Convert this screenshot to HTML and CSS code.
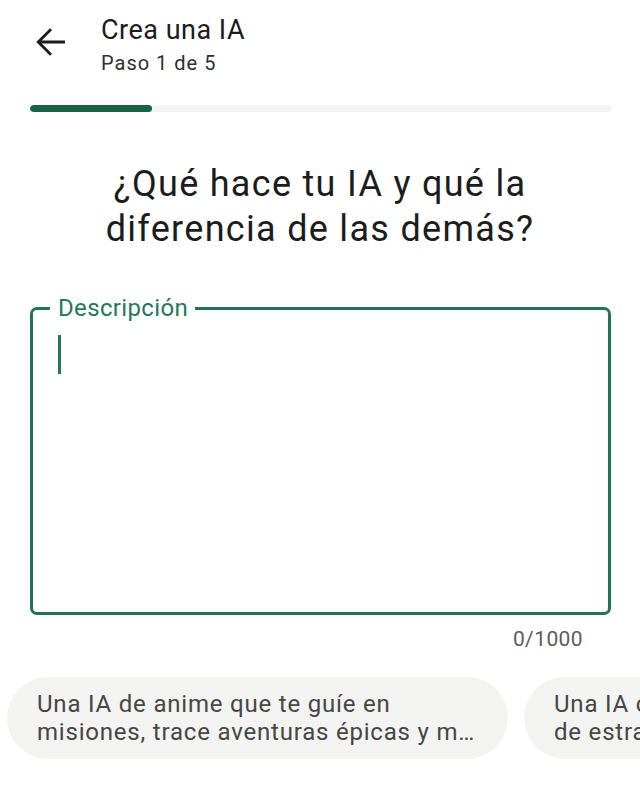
FILE: index.html
```html
<!DOCTYPE html>
<html lang="es">
<head>
<meta charset="utf-8">
<title>Crea una IA</title>
<link rel="stylesheet" href="styles.css">
</head>
<body>
<header class="topbar">
  <svg class="back" viewBox="0 0 24 24" width="42" height="42" aria-hidden="true">
    <path d="M20 12H5.2M12 4.7L4.7 12l7.3 7.3" fill="none" stroke="#1c1c1c" stroke-width="1.6" stroke-linecap="butt" stroke-linejoin="miter"/>
  </svg>
  <div class="titles">
    <div class="title">Crea una IA</div>
    <div class="subtitle">Paso 1 de 5</div>
  </div>
</header>

<div class="progress"><div class="progress-fill" style="width:21%"></div></div>

<h1 class="question">¿Qué hace tu IA y qué la diferencia de las demás?</h1>

<fieldset class="field">
  <legend class="field-label">Descripción</legend>
  <div class="field-body"><span class="caret"></span></div>
</fieldset>
<div class="counter">0/1000</div>

<div class="chips">
  <div class="chip">
    <span class="chip-line">Una IA de anime que te guíe en</span>
    <span class="chip-line">misiones, trace aventuras épicas y mucho más</span>
  </div>
  <div class="chip">
    <span class="chip-line">Una IA compañera en tus partidas</span>
    <span class="chip-line">de estrategia que te ayude a ganar</span>
  </div>
</div>
</body>
</html>
```

FILE: styles.css
```css
html, body {
  margin: 0;
  padding: 0;
  background: #ffffff;
}
body {
  width: 640px;
  height: 785px;
  overflow: hidden;
  font-family: Roboto, "Noto Sans", "Liberation Sans", sans-serif;
  color: #1c1c1c;
}

.topbar {
  display: flex;
  align-items: flex-start;
  padding-top: 14px;
}
.back {
  display: block;
  margin: 7px 29px 0 30px;
  flex: none;
}
.titles {
  display: flex;
  flex-direction: column;
}
.title {
  font-size: 27px;
  line-height: 32px;
  letter-spacing: 0.5px;
  color: #1c1c1c;
}
.subtitle {
  margin-top: 5px;
  font-size: 20px;
  line-height: 24px;
  letter-spacing: 1px;
  color: #2f2f2f;
}

.progress {
  margin: 30px 28px 0 30px;
  height: 7px;
  border-radius: 4px;
  background: #f2f3f2;
  overflow: hidden;
}
.progress-fill {
  height: 100%;
  border-radius: 4px;
  background: #1a6244;
}

.question {
  margin: 50px 40px 0;
  font-size: 36px;
  line-height: 45px;
  font-weight: 400;
  letter-spacing: 1.3px;
  text-align: center;
  color: #1c1c1c;
}

.field {
  margin: 42px 29px 0 30px;
  padding: 0;
  border: 3px solid #1f7653;
  border-radius: 7px;
  min-inline-size: 0;
}
.field-label {
  margin-left: 17px;
  padding: 0 7px 0 8px;
  font-size: 24px;
  line-height: 28px;
  letter-spacing: 0.35px;
  color: #24795a;
}
.field-body {
  height: 290px;
  padding: 13px 0 0 25px;
  box-sizing: border-box;
}
.caret {
  display: block;
  width: 3px;
  height: 39px;
  background: #23795a;
}

.counter {
  margin: 12px 57px 0 0;
  text-align: right;
  font-size: 21px;
  line-height: 24px;
  letter-spacing: 0.4px;
  color: #5c5c5c;
}

.chips {
  display: flex;
  gap: 16px;
  margin: 26px 0 0 7px;
  overflow: hidden;
}
.chip {
  flex: none;
  display: flex;
  flex-direction: column;
  box-sizing: border-box;
  width: 501px;
  height: 82px;
  padding: 13px 30px;
  border-radius: 41px;
  background: #f3f3f1;
}
.chip-line {
  display: block;
  white-space: nowrap;
  overflow: hidden;
  text-overflow: ellipsis;
  font-size: 24px;
  line-height: 28px;
  letter-spacing: 0.8px;
  color: #464646;
}
```
